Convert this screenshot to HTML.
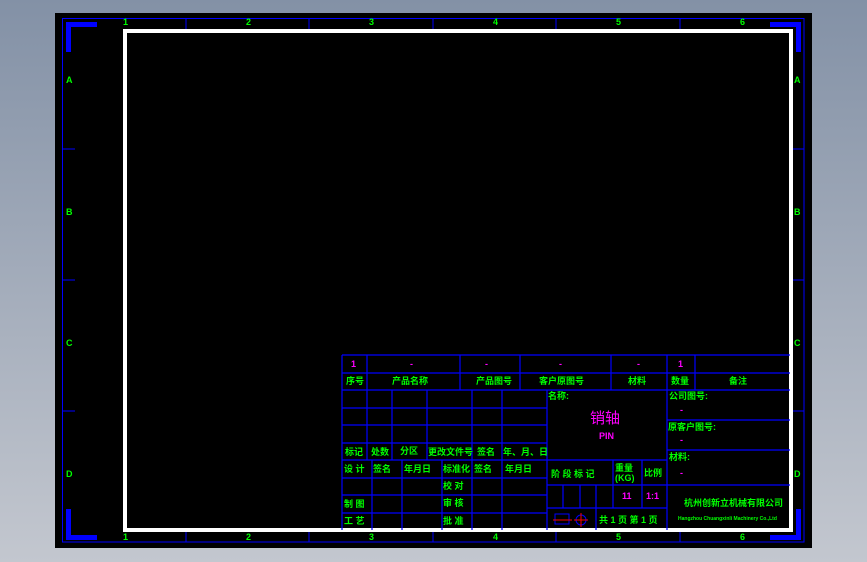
<!DOCTYPE html>
<html><head><meta charset="utf-8"><style>
html,body{margin:0;padding:0;width:867px;height:562px;overflow:hidden;background:linear-gradient(#8391a6,#c3c7cf);}
svg{display:block}
text{font-family:"Liberation Sans","Noto Sans CJK SC",sans-serif;font-size:9px;font-weight:bold;fill:#00ff00}
.m{fill:#ff00ff}
</style></head><body>
<svg width="867" height="562" viewBox="0 0 867 562" xmlns="http://www.w3.org/2000/svg">
<rect x="55" y="13" width="757" height="535" fill="#000"/>
<rect x="62.5" y="18.5" width="741.5" height="523.5" fill="none" stroke="#0000ff" stroke-width="1"/>
<path d="M66 22H97V27H71V52H66Z" fill="#0000ff"/>
<path d="M801 22H770V27H796V52H801Z" fill="#0000ff"/>
<path d="M66 540H97V535H71V509H66Z" fill="#0000ff"/>
<path d="M801 540H770V535H796V509H801Z" fill="#0000ff"/>
<g stroke="#0000ff" stroke-width="1">
<path d="M186 19V29M309 19V29M433 19V29M556 19V29M680 19V29M186 531V542M309 531V542M433 531V542M556 531V542M680 531V542"/>
<path d="M62 149H75M62 280H75M62 411H75M792 149H804M792 280H804M792 411H804"/>
</g>
<g>
<text x="123" y="25">1</text><text x="246" y="25">2</text><text x="369" y="25">3</text><text x="493" y="25">4</text><text x="616" y="25">5</text><text x="740" y="25">6</text>
<text x="123" y="540">1</text><text x="246" y="540">2</text><text x="369" y="540">3</text><text x="493" y="540">4</text><text x="616" y="540">5</text><text x="740" y="540">6</text>
<text x="66" y="83">A</text><text x="66" y="215">B</text><text x="66" y="346">C</text><text x="66" y="477">D</text>
<text x="794" y="83">A</text><text x="794" y="215">B</text><text x="794" y="346">C</text><text x="794" y="477">D</text>
</g>
<rect x="125" y="31" width="666" height="499" fill="none" stroke="#fff" stroke-width="4"/>
<g stroke="#0000ff" stroke-width="1.2" fill="none">
<path d="M342 355H790M342 373H790M342 390H790"/>
<path d="M342 355V530M367 355V460M460 355V390M520 355V390M611 355V390M667 355V530M695 355V390"/>
<path d="M342 408H547M342 425H547M342 443H547M342 460H547M342 478H547M342 495H547M342 513H547"/>
<path d="M392 390V460M427 390V460M472 390V530M502 390V530M547 390V530"/>
<path d="M372 460V530M402 460V530M442 460V530"/>
<path d="M547 460H667M547 485H667M547 508H667M613 460V508M642 460V508M563 485V508M580 485V508M596 485V530"/>
<path d="M667 420H790M667 450H790M667 485H790"/>
</g>
<g>
<text class="m" x="351" y="367">1</text><text class="m" x="410" y="367">-</text><text class="m" x="485" y="367">-</text><text class="m" x="559" y="367">-</text><text class="m" x="637" y="367">-</text><text class="m" x="678" y="367">1</text>
<text x="346" y="384">序号</text><text x="392" y="384">产品名称</text><text x="476" y="384">产品图号</text><text x="539" y="384">客户原图号</text><text x="628" y="384">材料</text><text x="671" y="384">数量</text><text x="729" y="384">备注</text>
<text x="345" y="455">标记</text><text x="371" y="455">处数</text><text x="400" y="454">分区</text><text x="428" y="455">更改文件号</text><text x="477" y="455">签名</text><text x="503" y="455">年、月、日</text>
<text x="344" y="472">设 计</text><text x="373" y="472">签名</text><text x="404" y="472">年月日</text><text x="443" y="472">标准化</text><text x="474" y="472">签名</text><text x="505" y="472">年月日</text>
<text x="443" y="489">校 对</text><text x="344" y="507">制 图</text><text x="443" y="506">审 核</text><text x="344" y="524">工 艺</text><text x="443" y="524">批 准</text>
<text x="548" y="399">名称:</text>
<text class="m" x="590" y="423" style="font-size:15px;font-weight:normal">销轴</text>
<text class="m" x="599" y="439">PIN</text>
<text x="551" y="477">阶 段 标 记</text>
<text x="615" y="471">重量</text><text x="615" y="481">(KG)</text><text x="644" y="476">比例</text>
<text class="m" x="622" y="499">11</text><text class="m" x="646" y="499">1:1</text>
<text x="599" y="523">共 1 页  第 1 页</text>
<text x="669" y="399">公司图号:</text><text class="m" x="680" y="413">-</text>
<text x="668" y="430">原客户图号:</text><text class="m" x="680" y="443">-</text>
<text x="669" y="460">材料:</text><text class="m" x="680" y="476">-</text>
<text x="684" y="506">杭州创新立机械有限公司</text>
<text x="678" y="520" style="font-size:5px">Hangzhou Chuangxinli Machinery Co.,Ltd</text>
</g>
<g stroke="#0000ff" fill="none"><rect x="555" y="514" width="14" height="10"/><circle cx="581" cy="520" r="5"/></g>
<path d="M553 520H572M574 520H588M581 513V527" stroke="#ff0000" stroke-width="1"/>
</svg>
</body></html>
